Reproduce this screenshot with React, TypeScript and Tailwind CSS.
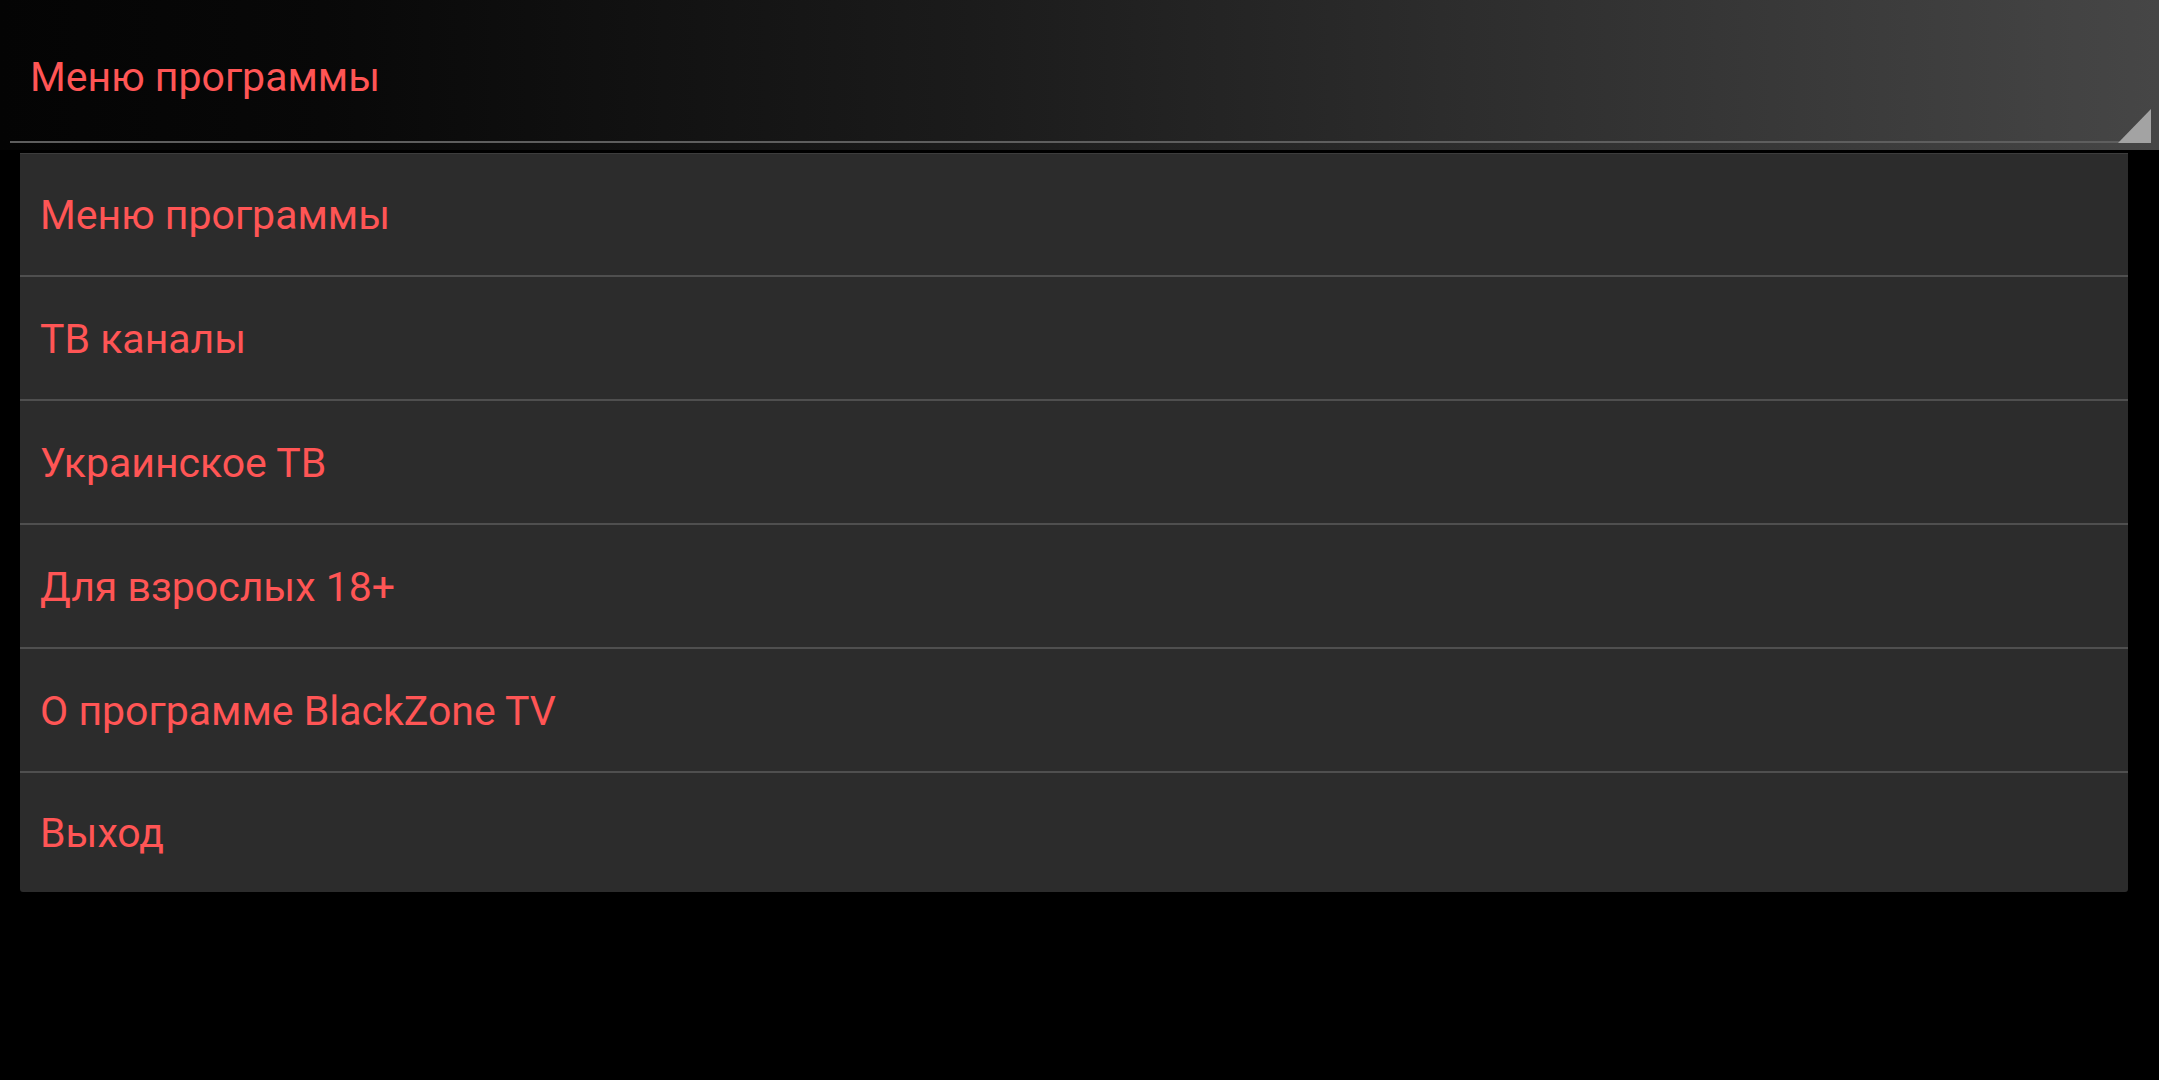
const items = [
  'Меню программы',
  'ТВ каналы',
  'Украинское ТВ',
  'Для взрослых 18+',
  'О программе BlackZone TV',
  'Выход',
]

export default function App() {
  return (
    <div
      className="min-h-[1080px] w-full bg-black text-[#ff5555]"
      style={{ fontFamily: 'Roboto, "Noto Sans", sans-serif' }}
    >
      {/* action bar / spinner header */}
      <div className="relative h-[150px] bg-[linear-gradient(to_right,#040404_0%,#080808_15%,#1b1b1b_45%,#464646_100%)]">
        <div className="flex h-[141px] items-center pt-[13px] pl-[30px] text-[41px] leading-none">
          Меню программы
        </div>
        <div className="ml-[10px] mr-[9px] h-[2px] bg-[#5e5e5e]" />
        <svg
          className="absolute left-[2118px] top-[109px]"
          width="33"
          height="34"
          viewBox="0 0 33 34"
        >
          <polygon points="33,0 33,34 0,34" fill="#a3a3a3" />
        </svg>
      </div>

      {/* dropdown list */}
      <div className="mt-[3px] ml-[20px] mr-[31px] flex flex-col rounded-b-[3px] border-t border-[#3d3d3d] bg-[#2c2c2c]">
        {items.map((label, i) => (
          <div
            key={label}
            className={
              i === 0
                ? 'flex h-[121px] items-center pt-[2px] pl-[20px] text-[41px] leading-none'
                : i === items.length - 1
                  ? 'flex h-[121px] items-center border-t-2 border-[#4f4f4f] pt-[2px] pl-[20px] text-[41px] leading-none'
                  : 'flex h-[124px] items-center border-t-2 border-[#4f4f4f] pt-[2px] pl-[20px] text-[41px] leading-none'
            }
          >
            {label}
          </div>
        ))}
      </div>
    </div>
  )
}
